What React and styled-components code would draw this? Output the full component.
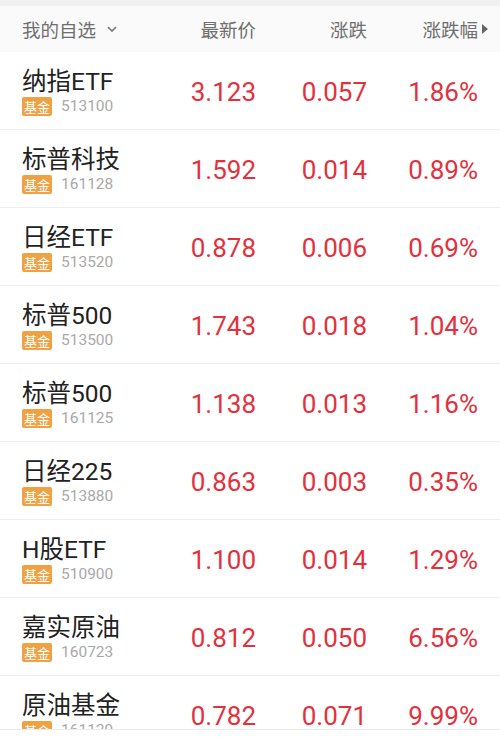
import React from 'react'
import styled, { createGlobalStyle } from 'styled-components'

const GlobalStyle = createGlobalStyle`
  html, body {
    margin: 0;
    padding: 0;
    background: #fff;
  }
  body {
    font-family: Roboto, "Noto Sans CJK SC", sans-serif;
  }
`

const Page = styled.div`
  height: 737px;
  display: flex;
  flex-direction: column;
  overflow: hidden;
`

const TopStrip = styled.div`
  height: 6px;
  background: #f1f1f1;
  flex: none;
`

const Grid = styled.div`
  display: grid;
  grid-template-columns: 1fr 111px 111px 111px;
  align-items: center;
  padding: 0 22px;
`

const Header = styled(Grid)`
  height: 46px;
  flex: none;
  background: #fafafa;
  color: #6f6f6f;
  font-size: 18.5px;
  font-family: "Noto Sans CJK SC", sans-serif;
`

const HeadCell = styled.div`
  display: flex;
  align-items: center;
  justify-content: ${p => (p.$right ? 'flex-end' : 'flex-start')};
  gap: 10px;
`

const Triangle = styled.span`
  width: 0;
  height: 0;
  border-top: 5px solid transparent;
  border-bottom: 5px solid transparent;
  border-left: 6px solid #666;
  margin-right: -10px;
  margin-left: -6px;
`

const List = styled.div`
  flex: 1;
  overflow: hidden;
`

const Row = styled(Grid)`
  height: 77px;
  border-bottom: 1px solid #efefef;
`

const NameBlock = styled.div`
  display: flex;
  flex-direction: column;
  padding-top: 2px;
`

const Name = styled.div`
  font-size: 24.5px;
  line-height: 28px;
  color: #222;
`

const Meta = styled.div`
  display: flex;
  align-items: center;
  gap: 9px;
  margin-top: 1px;
`

const Tag = styled.span`
  display: inline-flex;
  align-items: center;
  justify-content: center;
  width: 30px;
  height: 19px;
  border-radius: 2px;
  background: #efa143;
  color: #fff;
  font-size: 13px;
  font-family: "Noto Sans CJK SC", sans-serif;
`

const Code = styled.span`
  font-size: 15.5px;
  color: #a9a9a9;
`

const Num = styled.div`
  text-align: right;
  font-size: 26px;
  color: #e2313d;
  padding-top: 3px;
`

const Footer = styled.div`
  height: 7px;
  flex: none;
  background: #fff;
  border-top: 1px solid #ececec;
`

const funds = [
  ['纳指ETF', '513100', '3.123', '0.057', '1.86%'],
  ['标普科技', '161128', '1.592', '0.014', '0.89%'],
  ['日经ETF', '513520', '0.878', '0.006', '0.69%'],
  ['标普500', '513500', '1.743', '0.018', '1.04%'],
  ['标普500', '161125', '1.138', '0.013', '1.16%'],
  ['日经225', '513880', '0.863', '0.003', '0.35%'],
  ['H股ETF', '510900', '1.100', '0.014', '1.29%'],
  ['嘉实原油', '160723', '0.812', '0.050', '6.56%'],
  ['原油基金', '161129', '0.782', '0.071', '9.99%'],
]

const Chevron = () => (
  <svg width="12" height="8" viewBox="0 0 12 8">
    <path d="M2 2 L6 6 L10 2" fill="none" stroke="#777" strokeWidth="1.6" />
  </svg>
)

const App = () => {
  return (
    <>
      <GlobalStyle />
      <Page>
        <TopStrip />
        <Header>
          <HeadCell>
            我的自选
            <Chevron />
          </HeadCell>
          <HeadCell $right>最新价</HeadCell>
          <HeadCell $right>涨跌</HeadCell>
          <HeadCell $right>
            涨跌幅
            <Triangle />
          </HeadCell>
        </Header>
        <List>
          {funds.map(([name, code, price, change, pct], i) => (
            <Row key={i}>
              <NameBlock>
                <Name>{name}</Name>
                <Meta>
                  <Tag>基金</Tag>
                  <Code>{code}</Code>
                </Meta>
              </NameBlock>
              <Num>{price}</Num>
              <Num>{change}</Num>
              <Num>{pct}</Num>
            </Row>
          ))}
        </List>
        <Footer />
      </Page>
    </>
  )
}

export default App
